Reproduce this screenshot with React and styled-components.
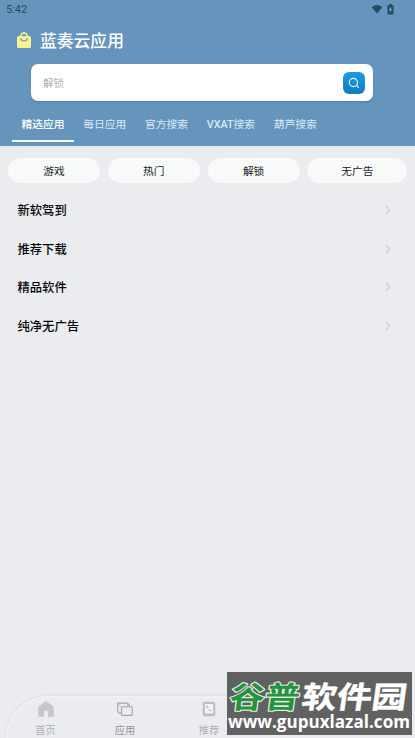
import styled, { createGlobalStyle } from 'styled-components';

const GlobalStyle = createGlobalStyle`
  * {
    box-sizing: border-box;
  }

  body {
    margin: 0;
    background-color: #eaecf0;
    font-family: Roboto, "Noto Sans CJK SC", sans-serif;
  }
`;
const Page = styled.div`
  display: flex;
  flex-direction: column;
  position: relative;
  height: 738px;
  overflow: hidden;
`;
const Header = styled.header`
  height: 146px;
  flex: none;
  background-color: #6595bd;
`;
const StatusBar = styled.div`
  display: flex;
  align-items: center;
  height: 18px;
  padding: 0 21px 0 6px;
  color: #294a64;
`;
const Clock = styled.span`
  flex: 1;
  padding-top: 1px;
  font-size: 11px;
  line-height: 18px;
`;
const StatusIcons = styled.div`
  display: flex;
  align-items: center;
  gap: 4px;
  height: 18px;
`;
const Brand = styled.div`
  display: flex;
  align-items: center;
  gap: 8px;
  height: 46px;
  padding-left: 16px;
`;
const Title = styled.h1`
  margin: 0;
  color: #fff;
  font-size: 16.8px;
  font-weight: 500;
  line-height: 46px;
`;
const SearchBox = styled.div`
  display: flex;
  align-items: center;
  justify-content: space-between;
  width: 342px;
  height: 37px;
  margin-left: 31px;
  padding: 0 8px 0 12px;
  border-radius: 7px;
  background-color: #fff;
  box-shadow: 0 1px 2px rgba(40, 70, 100, 0.35);
`;
const Placeholder = styled.span`
  color: #8f8f8f;
  font-size: 10.6px;
  font-weight: 300;
`;
const SearchButton = styled.button`
  display: flex;
  align-items: center;
  justify-content: center;
  width: 22px;
  height: 22px;
  padding: 0;
  border: 0;
  border-radius: 6px;
  background: linear-gradient(#1d9be0, #127cc0);
`;
const Tabs = styled.nav`
  display: flex;
  height: 41px;
  padding-left: 12px;
`;
const Tab = styled.div`
  height: 41px;
  padding: 0 9.4px;
  border-bottom: 2px solid ${(props) => (props.$active ? '#fff' : 'transparent')};
  color: ${(props) => (props.$active ? '#fff' : '#dce9f4')};
  font-size: 10.75px;
  font-weight: ${(props) => (props.$active ? 500 : 400)};
  line-height: 47px;
  white-space: nowrap;
`;
const Latin = styled.span`
  font-weight: 500;
`;
const Chips = styled.div`
  display: flex;
  gap: 7.8px;
  padding: 12px 8px 0;
`;
const Chip = styled.div`
  flex: ${(props) => (props.$wide ? '0 0 100px' : '0 0 92px')};
  height: 25px;
  border-radius: 13px;
  background-color: #f7faf9;
  color: #202323;
  font-size: 10.7px;
  line-height: 27px;
  text-align: center;
`;
const List = styled.ul`
  margin: 8px 0 0;
  padding: 0;
  list-style: none;
`;
const Row = styled.li`
  display: flex;
  align-items: center;
  justify-content: space-between;
  height: 38.5px;
  padding: 0 23px 0 17.5px;
  color: #060608;
  font-size: 12.3px;
  font-weight: 500;
`;
const BottomBar = styled.nav`
  display: flex;
  height: 60px;
  margin: auto 6px -18px;
  border-top: 2px solid #eff0f3;
  border-left: 2px solid #eff0f3;
  border-right: 2px solid #eff0f3;
  border-radius: 42px 42px 0 0;
  box-shadow: 0 -1px 3px rgba(120, 120, 130, 0.12);
`;
const NavItem = styled.div`
  display: flex;
  flex-direction: column;
  align-items: center;
  width: 84px;
  padding-top: 1px;
  color: ${(props) => (props.$active ? '#939497' : '#b0b1b4')};
  font-size: 10.2px;
  line-height: 20px;

  &:first-child {
    width: 75px;
  }

  svg {
    flex: none;
  }
`;
const Watermark = styled.div`
  position: absolute;
  left: 227px;
  top: 672px;
  width: 185px;
  height: 63px;
  background-color: rgba(91, 91, 92, 0.96);

  svg {
    display: block;
  }
`;

const BagIcon = () => (
  <svg width="16" height="18" viewBox="0 0 16 18">
    <path d="M4.5 5.5V4.6a3.5 3.5 0 0 1 7 0v.9" fill="none" stroke="#f6f294" strokeWidth="1.6" />
    <rect x="1" y="4" width="14" height="12" rx="1.6" fill="#f6f294" />
    <path d="M4.6 6.4a3.5 3.2 0 0 0 6.8 0" fill="none" stroke="#8b9c92" strokeWidth="1.4" />
  </svg>
);

const WifiIcon = () => (
  <svg width="12" height="10" viewBox="0 0 13 10">
    <path d="M.6 3Q6.5-1.4 12.4 3L6.5 9.8Z" fill="currentColor" />
  </svg>
);

const BatteryIcon = () => (
  <svg width="7" height="11" viewBox="0 0 7 11">
    <path d="M2.2 0h2.6v1.2h1.7v9.3H.5V1.2h1.7Z" fill="currentColor" />
    <path d="M4.1 2.6 2 6h1.2l-.3 2.5L5 5.2H3.8Z" fill="#8fb4d2" />
  </svg>
);

const SearchIcon = () => (
  <svg width="12" height="12" viewBox="0 0 12 12" fill="none" stroke="#e9f7ff" strokeWidth="1.1" strokeLinecap="round">
    <circle cx="5.4" cy="5.5" r="4.1" />
    <path d="m8.8 8.7 1.7 2" />
  </svg>
);

const Chevron = () => (
  <svg width="8" height="12" viewBox="0 0 8 12" fill="none" stroke="#cfd1d5" strokeWidth="1.6">
    <path d="m1.8 2 4 4-4 4" />
  </svg>
);

const HomeIcon = () => (
  <svg width="18" height="22" viewBox="0 0 18 22">
    <path d="M1.2 9Q1.2 7.9 2 7.3L7.8 2.7Q9 1.8 10.2 2.7L16 7.3Q16.8 7.9 16.8 9V17.8H11V13.5a2 2 0 0 0-4 0v4.3H1.2Z" fill="#c6c7c9" />
  </svg>
);

const AppsIcon = () => (
  <svg width="18" height="22" viewBox="0 0 18 22" fill="none" stroke="#a6a7aa" strokeWidth="1.1">
    <path d="M5.5 14.1H3.1L1.7 12.5V4.1H11.6l1.7 2V7.8" />
    <path d="m1.7 4.1 3.8 3.7M11.6 4.1v3.7" strokeWidth=".7" />
    <rect x="5.5" y="7.8" width="10.8" height="8.6" rx="1" />
  </svg>
);

const NoteIcon = () => (
  <svg width="18" height="22" viewBox="0 0 18 22">
    <rect x="2.7" y="2.8" width="12.6" height="14.5" rx="2.2" fill="#bcbdc1" />
    <rect x="4.8" y="4.9" width="8.4" height="9.6" fill="#f2f2f5" />
    <path d="m5.8 9.4 1.3-2.7 1.3 2.7M8.5 11.4H12" fill="none" stroke="#b7b8bc" strokeWidth=".9" />
  </svg>
);

const WatermarkLogo = () => (
  <svg width="185" height="63" viewBox="0 0 185 63">
    <g
      transform="translate(1.5 36) skewX(-8) scale(1 .86)"
      fontFamily='"Noto Sans CJK SC", sans-serif'
      fontWeight="700"
      fontSize="35"
      strokeLinejoin="round"
      paintOrder="stroke"
    >
      <text fill="#24923f" stroke="#e5f0e4" strokeWidth="2.6">谷普</text>
      <text x="72" fill="#fff" stroke="#fff" strokeWidth=".5">软件园</text>
    </g>
    <text
      x="1"
      y="56"
      textLength="182"
      lengthAdjust="spacingAndGlyphs"
      fill="#fff"
      fontFamily='"Open Sans", sans-serif'
      fontWeight="700"
      fontSize="17"
    >
      www.gupuxlazal.com
    </text>
  </svg>
);

const tabs = ['精选应用', '每日应用', '官方搜索', 'VXAT搜索', '葫芦搜索'];
const chips = ['游戏', '热门', '解锁', '无广告'];
const rows = ['新软驾到', '推荐下载', '精品软件', '纯净无广告'];

const App = () => {
  return (
    <Page>
      <GlobalStyle />
      <Header>
        <StatusBar>
          <Clock>5:42</Clock>
          <StatusIcons>
            <WifiIcon />
            <BatteryIcon />
          </StatusIcons>
        </StatusBar>
        <Brand>
          <BagIcon />
          <Title>蓝奏云应用</Title>
        </Brand>
        <SearchBox>
          <Placeholder>解锁</Placeholder>
          <SearchButton type="button">
            <SearchIcon />
          </SearchButton>
        </SearchBox>
        <Tabs>
          {tabs.map((tab, index) => (
            <Tab key={tab} $active={index === 0}>
              {tab.startsWith('VXAT') ? (
                <>
                  <Latin>VXAT</Latin>
                  {tab.slice(4)}
                </>
              ) : (
                tab
              )}
            </Tab>
          ))}
        </Tabs>
      </Header>
      <Chips>
        {chips.map((chip, index) => (
          <Chip key={chip} $wide={index === 3}>
            {chip}
          </Chip>
        ))}
      </Chips>
      <List>
        {rows.map((row) => (
          <Row key={row}>
            {row}
            <Chevron />
          </Row>
        ))}
      </List>
      <BottomBar>
        <NavItem>
          <HomeIcon />
          首页
        </NavItem>
        <NavItem $active>
          <AppsIcon />
          应用
        </NavItem>
        <NavItem>
          <NoteIcon />
          推荐
        </NavItem>
      </BottomBar>
      <Watermark>
        <WatermarkLogo />
      </Watermark>
    </Page>
  );
};

export default App;
